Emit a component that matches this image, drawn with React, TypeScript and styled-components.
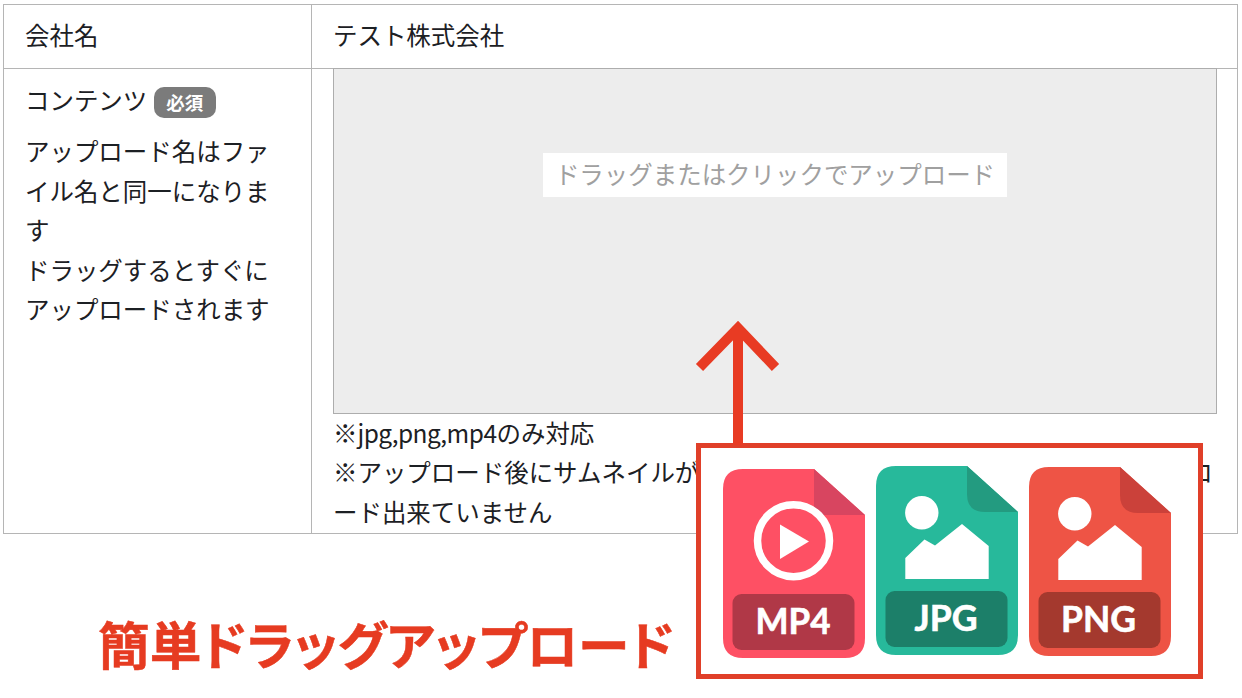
import React from "react";
import styled, { createGlobalStyle } from "styled-components";

interface FileIconProps {
  item: {
    label: string;
    color: string;
    fold: string;
    band: string;
    textX: number;
    textWidth: number;
    offset: number;
    kind: "video" | "image";
  };
}

const files: FileIconProps["item"][] = [
  {
    label: "MP4",
    color: "#fe5064",
    fold: "#d84560",
    band: "#b03847",
    textX: 32.5,
    textWidth: 75,
    offset: 3,
    kind: "video",
  },
  {
    label: "JPG",
    color: "#27b99b",
    fold: "#239b80",
    band: "#1c7f69",
    textX: 38.5,
    textWidth: 63,
    offset: 0,
    kind: "image",
  },
  {
    label: "PNG",
    color: "#ee5445",
    fold: "#cb413a",
    band: "#a4392e",
    textX: 32,
    textWidth: 75,
    offset: 1,
    kind: "image",
  },
];

const FileIcon: React.FC<FileIconProps> = (props) => {
  const { label, color, fold, band, textX, textWidth, offset, kind } =
    props.item;
  return (
    <IconSvg $offset={offset} viewBox="0 0 142 189">
      <path
        d="M20 0H91L142 46V169Q142 189 122 189H20Q0 189 0 169V20Q0 0 20 0Z"
        fill={color}
      />
      {kind === "video" ? (
        <>
          <path d="M91 0L142 46H91Z" fill={fold} />
          <circle
            cx="70.5"
            cy="71.7"
            r="36"
            fill="none"
            stroke="#fff"
            strokeWidth="7.5"
          />
          <path d="M57 55.5L86 72.5L57 90Z" fill="#fff" />
        </>
      ) : (
        <>
          <path d="M91 0L142 46H109Q91 46 91 28Z" fill={fold} />
          <circle cx="45.8" cy="46.8" r="16.7" fill="#fff" />
          <path d="M29.3 113V92L48.5 73.5L59 79.5L86 58L112.7 80V113Z" fill="#fff" />
        </>
      )}
      <rect x="9.5" y="125" width="122" height="56" rx="9" fill={band} />
      <text
        x={textX}
        y="164.5"
        fill="#fff"
        fontFamily="Lato, 'Noto Sans', sans-serif"
        fontSize="36"
        fontWeight="700"
        stroke="#fff"
        strokeWidth="0.6"
        textLength={textWidth}
        lengthAdjust="spacingAndGlyphs"
      >
        {label}
      </text>
    </IconSvg>
  );
};

const App: React.FC = () => {
  return (
    <Page>
      <GlobalStyle />
      <Table>
        <Row $height={64}>
          <Label>
            <Name>会社名</Name>
          </Label>
          <Value>
            <Name>テスト株式会社</Name>
          </Value>
        </Row>
        <Row $height={465}>
          <Label>
            <Title>
              コンテンツ<Badge>必須</Badge>
            </Title>
            <Text>
              アップロード名はファイル名と同一になります
              <br />
              ドラッグするとすぐにアップロードされます
            </Text>
          </Label>
          <Value>
            <DropZone>
              <DropText>ドラッグまたはクリックでアップロード</DropText>
            </DropZone>
            <Notes>
              ※<Formats>jpg,png,mp4</Formats>のみ対応
              <br />
              ※アップロード後にサムネイルが表示されない場合は正常にファイルをアップロード出来ていません
            </Notes>
          </Value>
        </Row>
      </Table>
      <Caption>簡単ドラッグアップロード</Caption>
      <Callout>
        <Arrow viewBox="0 0 86 124">
          <path
            d="M4.5 46.5L43 7L80.5 46.5M43 9V124"
            fill="none"
            stroke="#e83b23"
            strokeWidth="10"
          />
        </Arrow>
        {files.map((item) => (
          <FileIcon key={item.label} item={item} />
        ))}
      </Callout>
    </Page>
  );
};

export default App;

const GlobalStyle = createGlobalStyle`
  * {
    box-sizing: border-box;
  }
  body {
    margin: 0;
    background: #fff;
  }
`;

const Page = styled.div`
  position: relative;
  width: 1242px;
  height: 698px;
  padding: 4px 0 0 3px;
  overflow: hidden;
  color: #1c2024;
  font-family: "Noto Sans CJK JP", sans-serif;
  font-size: 24.46px;
  font-weight: 400;
  line-height: 39.4px;
`;

const Table = styled.div`
  width: 1235px;
  border: 1px solid #b5b5b5;
  border-bottom: 0;
`;

const Row = styled.div<{ $height: number }>`
  display: flex;
  height: ${(props) => props.$height}px;
  border-bottom: 1px solid #b5b5b5;
`;

const Label = styled.div`
  width: 308px;
  flex: none;
  padding: 0 20px 0 21px;
  border-right: 1px solid #b5b5b5;
`;

const Value = styled.div`
  flex: 1;
  padding: 0 19px 0 21px;
`;

const Name = styled.div`
  padding-top: 10px;
`;

const Title = styled.div`
  display: flex;
  align-items: center;
  margin-top: 11px;
`;

const Badge = styled.span`
  width: 62px;
  height: 31px;
  margin: 5px 0 0 6.5px;
  border-radius: 10px;
  background: #7b7b7b;
  color: #fff;
  font-size: 18.5px;
  font-weight: 700;
  line-height: 30px;
  text-align: center;
`;

const Text = styled.div`
  width: 250px;
  margin-top: 12px;
  word-break: break-all;
`;

const DropZone = styled.div`
  display: flex;
  align-items: flex-start;
  justify-content: center;
  width: 884px;
  height: 346px;
  margin-top: -1px;
  padding-top: 84px;
  border: 1px solid #adadad;
  background: #ededed;
`;

const DropText = styled.div`
  width: 464px;
  height: 44px;
  background: #fff;
  color: #a0a0a0;
  line-height: 42px;
  text-align: center;
  white-space: nowrap;
`;

const Notes = styled.div`
  width: 884px;
  margin-top: -1px;
  line-break: anywhere;
`;

const Formats = styled.span`
  letter-spacing: -0.5px;
`;

const Caption = styled.h1`
  margin: 71px 0 0 95px;
  color: #e63b21;
  font-size: 51.7px;
  font-weight: 700;
  line-height: 76px;
  font-feature-settings: "palt";
  white-space: nowrap;
  -webkit-text-stroke: 0.5px #e63b21;
`;

const Callout = styled.div`
  position: absolute;
  left: 696px;
  top: 443px;
  display: flex;
  gap: 11px;
  width: 507px;
  height: 236px;
  padding: 18px 0 0 22px;
  border: 5px solid #e03f29;
  background: #fff;
`;

const Arrow = styled.svg`
  position: absolute;
  left: -6px;
  top: -127px;
  width: 86px;
  height: 124px;
`;

const IconSvg = styled.svg<{ $offset: number }>`
  flex: none;
  width: 142px;
  height: 189px;
  margin-top: ${(props) => props.$offset}px;
`;
